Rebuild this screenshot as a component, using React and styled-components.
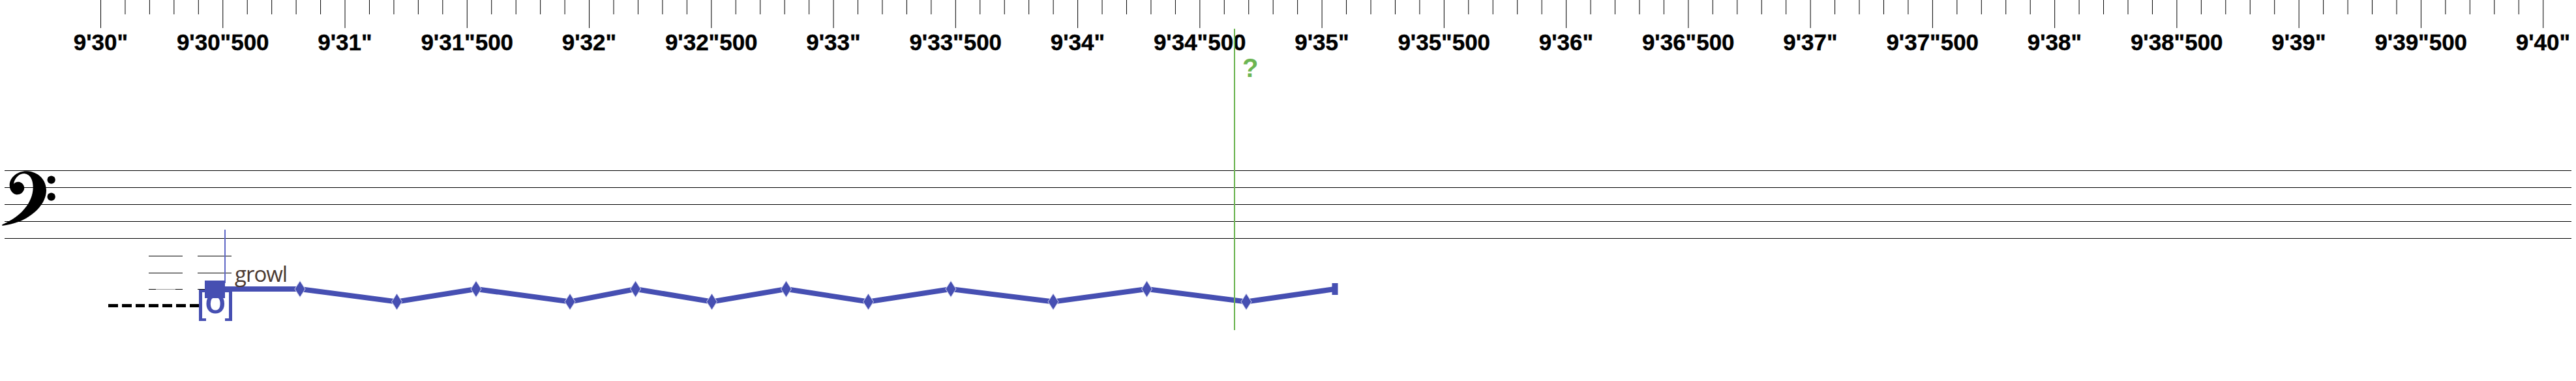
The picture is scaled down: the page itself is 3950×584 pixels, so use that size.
import React from 'react'
import styled, { createGlobalStyle } from 'styled-components'

const TICK_START = 154.5
const TICK_STEP = 37.452
const SECONDS = [30, 31, 32, 33, 34, 35, 36, 37, 38, 39]

const labels = []
SECONDS.forEach((s) => {
  labels.push(`9'${s}"`)
  labels.push(`9'${s}"500`)
})
labels.push(`9'40"`)

const ticks = []
for (let i = 0; i <= 100; i++) ticks.push(i)

const glissando = [
  [345, 443], [460, 443], [608.5, 462.5], [730, 443], [874, 462.5], [974.5, 443],
  [1091.5, 462.5], [1205.5, 443], [1331.5, 462.5], [1458, 443], [1615, 462.5],
  [1758.5, 443], [1911, 462.5], [2047, 443],
]

const GlobalStyle = createGlobalStyle`
  html, body {
    margin: 0;
    padding: 0;
    background: #fff;
  }
`

const Page = styled.div`
  position: relative;
  width: 3950px;
  height: 584px;
  overflow: hidden;
  background: #fff;
  font-family: "Liberation Sans", Arial, sans-serif;
`

const RulerTicks = styled.svg`
  display: block;
  width: 3950px;
  height: 43px;
`

const Labels = styled.div`
  display: flex;
  height: 218px;
  padding-left: 60.87px;
`

const TimeLabel = styled.div`
  flex: 0 0 187.26px;
  padding-top: 4px;
  text-align: center;
  white-space: nowrap;
  font-size: 35px;
  line-height: 35px;
  font-weight: 700;
  color: #000;
  -webkit-text-stroke: 0.4px #000;
`

const Staff = styled.div`
  display: flex;
  flex-direction: column;
  gap: 25px;
  padding: 0 7px;
`

const StaffLine = styled.div`
  height: 1px;
  background: #000;
`

const Overlay = styled.svg`
  position: absolute;
  left: 0;
  top: 0;
  width: 3950px;
  height: 584px;
`

/* ledger lines sit in two columns left of the notehead */
const LedgerGroup = styled.div`
  position: absolute;
  left: 228px;
  top: 392px;
  display: flex;
  gap: 23px;
`

const LedgerColumn = styled.div`
  display: flex;
  flex-direction: column;
  gap: 24.5px;
  width: 52px;
`

const Ledger = styled.div`
  height: 1px;
  background: ${(p) =>
    p.$faded
      ? 'linear-gradient(90deg, #000 0 11px, #999 11px 41px, #000 41px)'
      : '#000'};
`

const Extension = styled.div`
  position: absolute;
  left: 166px;
  top: 466px;
  width: 139px;
  height: 5px;
  background: repeating-linear-gradient(90deg, #000 0 14.8px, transparent 14.8px 20.8px);
`

const Marker = styled.div`
  position: absolute;
  left: 1892px;
  top: 44px;
  height: 462px;
  box-sizing: border-box;
  padding: 40px 0 0 11px;
  border-left: 2px solid #6cb552;
  font-size: 40px;
  line-height: 40px;
  font-weight: 700;
  color: #6cb552;
`

const Chord = styled.div`
  position: absolute;
  left: 305px;
  top: 444px;
  display: flex;
  width: 50.5px;
`

const Stem = styled.div`
  position: absolute;
  left: 39px;
  top: -92px;
  width: 1.5px;
  height: 82px;
  background: #6068c6;
`

const NoteHead = styled.div`
  position: absolute;
  left: 9px;
  top: -14px;
  width: 31px;
  height: 27px;
  background: #464fb2;
`

const Bracket = styled.div`
  flex: none;
  width: 5.5px;
  height: 40px;
  border: 4px solid #464fb2;
  ${(p) => (p.$right ? 'border-left: 0; border-right-width: 5.5px;' : 'border-right: 0; border-left-width: 5.5px;')}
`

const ChordNote = styled.div`
  flex: 1;
  min-width: 0;
  display: flex;
  justify-content: center;
  font-family: "Open Sans", sans-serif;
  font-size: 54px;
  line-height: 30px;
  font-weight: 600;
  color: #464fb2;
`

const Articulation = styled.div`
  position: absolute;
  left: 360px;
  top: 398px;
  font-family: "Open Sans", sans-serif;
  font-size: 33px;
  line-height: 44px;
  letter-spacing: -1px;
  color: #4a3830;
`

function BassClef() {
  return (
    <g transform="translate(0 250) scale(0.3333)">
      <path d="M10 283 C100 245 150 180 152 115 C153 80 140 50 112 48 C90 48 68 65 63 96 C72 86 86 84 97 90 C110 98 115 112 110 124 C103 140 88 147 72 144 C55 140 44 122 44 100 C46 62 85 35 125 37 C175 40 212 75 213 125 C212 190 150 245 85 270 C60 279 35 284 10 288 Z" fill="#000" />
      <circle cx="236" cy="77" r="18.5" fill="#000" />
      <circle cx="236" cy="155" r="18.5" fill="#000" />
    </g>
  )
}

export default function App() {
  return (
    <Page>
      <GlobalStyle />
      <RulerTicks viewBox="0 0 3950 43">
        {ticks.map((i) => {
          const x = TICK_START + i * TICK_STEP
          return <line key={i} x1={x} x2={x} y1={0} y2={i % 5 === 0 ? 43 : 22} stroke="#000" strokeWidth="1" />
        })}
      </RulerTicks>
      <Labels>
        {labels.map((l) => (
          <TimeLabel key={l}>{l}</TimeLabel>
        ))}
      </Labels>
      <Staff>
        {[0, 1, 2, 3, 4].map((i) => (
          <StaffLine key={i} />
        ))}
      </Staff>

      <LedgerGroup>
        <LedgerColumn>
          <Ledger />
          <Ledger />
          <Ledger $faded />
        </LedgerColumn>
        <LedgerColumn>
          <Ledger />
          <Ledger />
          <Ledger />
        </LedgerColumn>
      </LedgerGroup>
      <Extension />
      <Overlay viewBox="0 0 3950 584">
        <BassClef />
        <polyline
          points={glissando.map((p) => p.join(',')).join(' ')}
          fill="none"
          stroke="#464fb2"
          strokeWidth="8"
        />
        <rect x="2042.5" y="434" width="9" height="18" fill="#464fb2" />
        {glissando.slice(1, -1).map(([x, y]) => (
          <polygon
            key={x}
            points={`${x},${y - 12.5} ${x + 8},${y} ${x},${y + 12.5} ${x - 8},${y}`}
            fill="#464fb2"
            stroke="#d5d7f0"
            strokeWidth="1"
          />
        ))}
      </Overlay>
      <Articulation>growl</Articulation>
      <Chord>
        <Stem />
        <Bracket />
        <ChordNote>o</ChordNote>
        <Bracket $right />
        <NoteHead />
      </Chord>
      <Marker>?</Marker>
    </Page>
  )
}
